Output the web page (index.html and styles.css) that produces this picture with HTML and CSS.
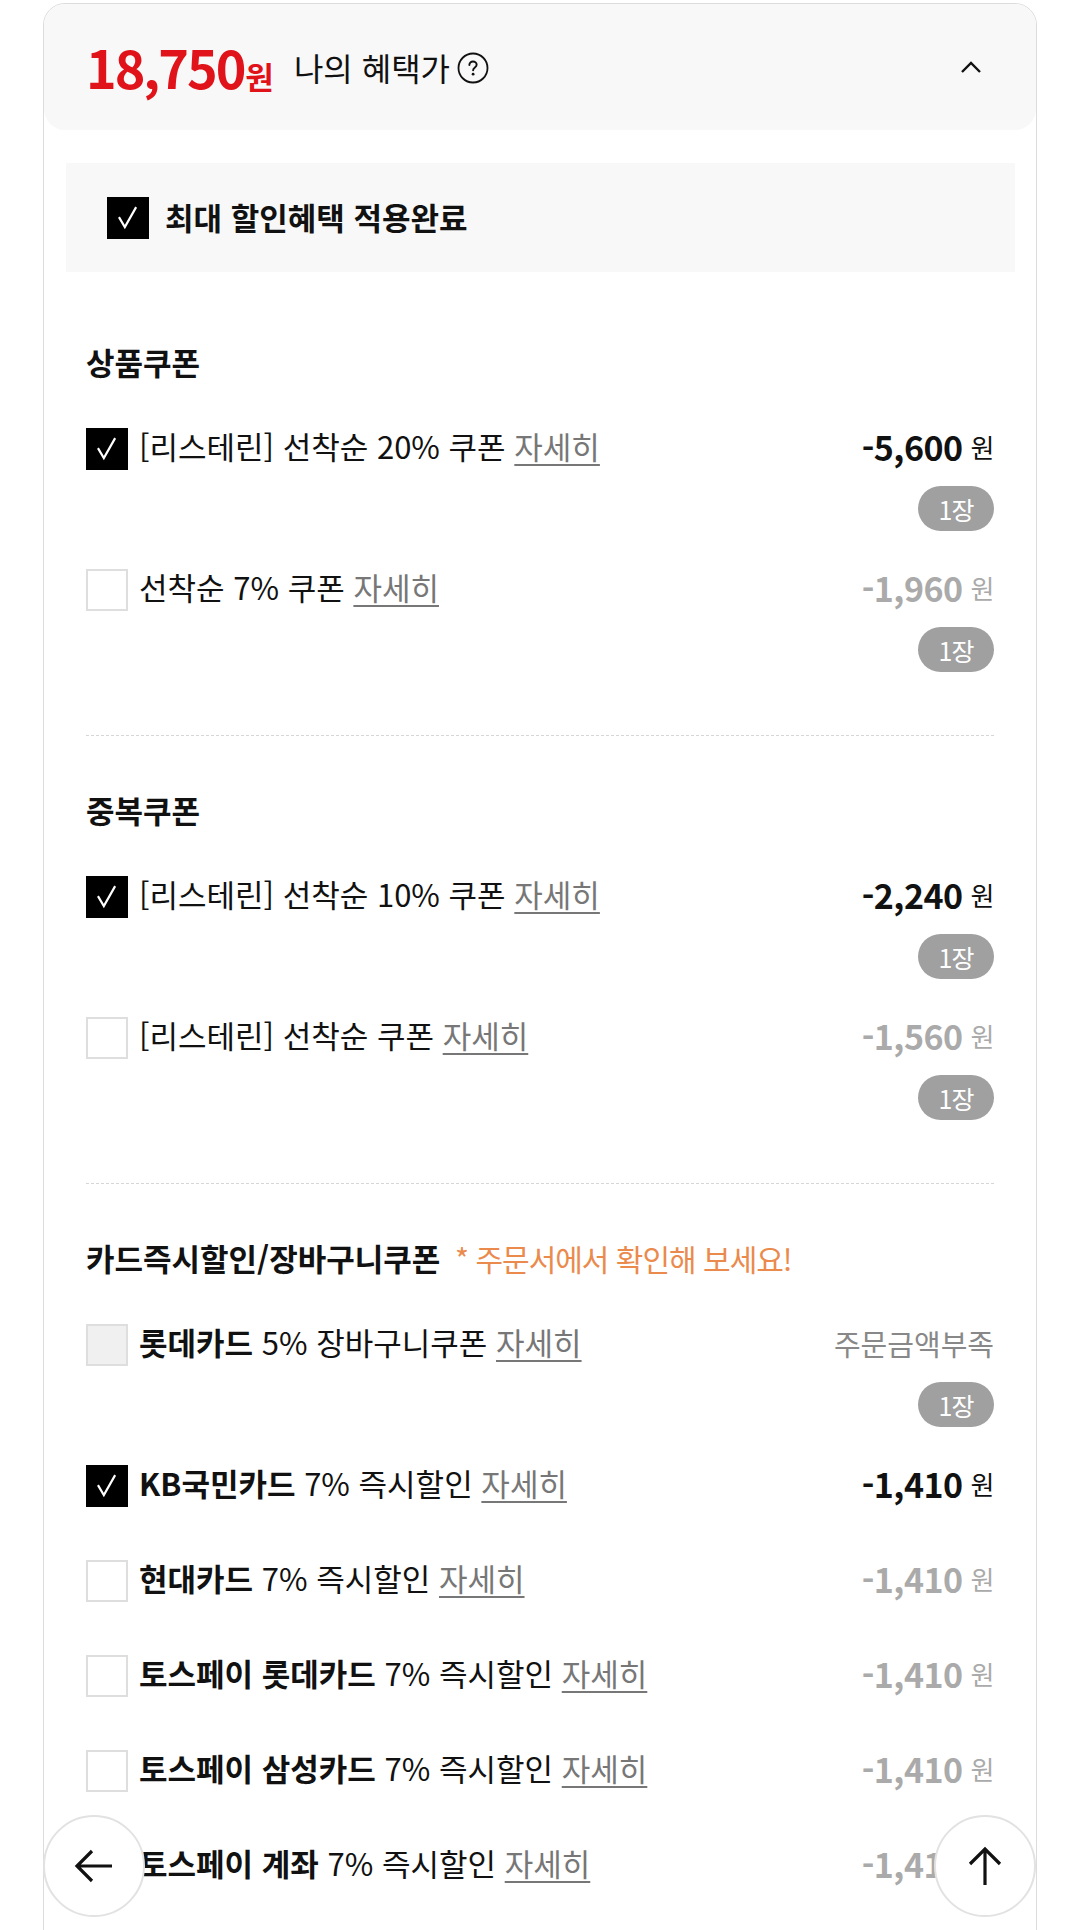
FILE: index.html
```html
<!DOCTYPE html>
<html lang="ko">
<head>
  <meta charset="UTF-8">
  <meta name="viewport" content="width=device-width,initial-scale=1">
  <title>나의 혜택가</title>
  <link rel="stylesheet" href="styles.css">
</head>
<body>

  <div class="card">
    <!-- 혜택가 요약 -->
    <div class="summary">
      <span class="total">18,750<small>원</small></span>
      <span class="summary-label">나의 혜택가</span>
      <svg class="help" width="32" height="32" viewBox="0 0 30 30"><circle cx="15" cy="15" r="13.6" fill="none" stroke="#111" stroke-width="1.7"/><path d="M11.6 12.2c0-2 1.5-3.3 3.4-3.3s3.4 1.3 3.4 3c0 2.6-3.3 2.6-3.3 5.2" fill="none" stroke="#111" stroke-width="1.8" stroke-linecap="round"/><circle cx="15.1" cy="20.8" r="1.3" fill="#111"/></svg>
      <svg class="toggle" width="22" height="14" viewBox="0 0 22 14"><path d="M2 12L11 3l9 9" fill="none" stroke="#111" stroke-width="2.4"/></svg>
    </div>

    <div class="max-box">
      <span class="check on"></span>
      <strong>최대 할인혜택 적용완료</strong>
    </div>

    <!-- 상품쿠폰 -->
    <section class="group">
      <h3>상품쿠폰</h3>
      <ul class="coupons">
        <li class="coupon">
          <span class="check on"></span>
          <p class="name">[리스테린] 선착순 20% 쿠폰 <a href="#">자세히</a></p>
          <div class="side"><span class="amount">-5,600<em>원</em></span><span class="badge">1장</span></div>
        </li>
        <li class="coupon off">
          <span class="check"></span>
          <p class="name">선착순 7% 쿠폰 <a href="#">자세히</a></p>
          <div class="side"><span class="amount">-1,960<em>원</em></span><span class="badge">1장</span></div>
        </li>
      </ul>
    </section>

    <!-- 중복쿠폰 -->
    <section class="group">
      <h3>중복쿠폰</h3>
      <ul class="coupons">
        <li class="coupon">
          <span class="check on"></span>
          <p class="name">[리스테린] 선착순 10% 쿠폰 <a href="#">자세히</a></p>
          <div class="side"><span class="amount">-2,240<em>원</em></span><span class="badge">1장</span></div>
        </li>
        <li class="coupon off">
          <span class="check"></span>
          <p class="name">[리스테린] 선착순 쿠폰 <a href="#">자세히</a></p>
          <div class="side"><span class="amount">-1,560<em>원</em></span><span class="badge">1장</span></div>
        </li>
      </ul>
    </section>

    <!-- 카드즉시할인 / 장바구니쿠폰 -->
    <section class="group last">
      <h3>카드즉시할인/장바구니쿠폰 <span class="notice">* 주문서에서 확인해 보세요!</span></h3>
      <ul class="coupons">
        <li class="coupon off">
          <span class="check disabled"></span>
          <p class="name"><b>롯데카드</b> 5% 장바구니쿠폰 <a href="#">자세히</a></p>
          <div class="side"><span class="lack">주문금액부족</span><span class="badge">1장</span></div>
        </li>
        <li class="coupon">
          <span class="check on"></span>
          <p class="name"><b>KB국민카드</b> 7% 즉시할인 <a href="#">자세히</a></p>
          <div class="side"><span class="amount">-1,410<em>원</em></span></div>
        </li>
        <li class="coupon off">
          <span class="check"></span>
          <p class="name"><b>현대카드</b> 7% 즉시할인 <a href="#">자세히</a></p>
          <div class="side"><span class="amount">-1,410<em>원</em></span></div>
        </li>
        <li class="coupon off">
          <span class="check"></span>
          <p class="name"><b>토스페이 롯데카드</b> 7% 즉시할인 <a href="#">자세히</a></p>
          <div class="side"><span class="amount">-1,410<em>원</em></span></div>
        </li>
        <li class="coupon off">
          <span class="check"></span>
          <p class="name"><b>토스페이 삼성카드</b> 7% 즉시할인 <a href="#">자세히</a></p>
          <div class="side"><span class="amount">-1,410<em>원</em></span></div>
        </li>
        <li class="coupon off">
          <span class="check"></span>
          <p class="name"><b>토스페이 계좌</b> 7% 즉시할인 <a href="#">자세히</a></p>
          <div class="side"><span class="amount">-1,410<em>원</em></span></div>
        </li>
      </ul>
    </section>
  </div>

  <!-- 플로팅 버튼 -->
  <button class="float-btn back" aria-label="뒤로">
    <svg width="40" height="36" viewBox="0 0 40 36"><path d="M38 18H4M18 3L3 18l15 15" fill="none" stroke="#111" stroke-width="3.2"/></svg>
  </button>
  <button class="float-btn top" aria-label="맨 위로">
    <svg width="36" height="40" viewBox="0 0 36 40"><path d="M18 39V4M3 18L18 3l15 15" fill="none" stroke="#111" stroke-width="3.2"/></svg>
  </button>

</body>
</html>
```

FILE: styles.css
```css
/* ===== 기본 ===== */
*,*::before,*::after{margin:0;padding:0;box-sizing:border-box}
html,body{
  width:100%;height:100%;
  overflow:hidden;
  background:#fff;
  color:#111;
  font-family:"Noto Sans CJK KR","Noto Sans",sans-serif;
}
ul{list-style:none}
a{color:#777;text-underline-offset:5px;text-decoration-thickness:2px}

/* ===== 카드 ===== */
.card{
  width:994px;
  margin:3px auto 0;
  border:1px solid #dcdcdc;
  border-radius:22px 22px 0 0;
  min-height:2000px;
}

/* ===== 요약 헤더 ===== */
.summary{
  height:126px;
  display:flex;
  align-items:center;
  padding:0 54px 0 42px;
  background:#f8f8f8;
  border-radius:21px;
}
.total{
  color:#e1131a;
  font-size:52px;
  font-weight:700;
  letter-spacing:-2px;
  line-height:1;
}
.total small{font-size:31px;letter-spacing:0;margin-left:1px}
.summary-label{
  font-size:32px;
  margin-left:20px;
}
.help{margin-left:7px;margin-top:2px}
.toggle{margin-left:auto}

/* ===== 최대 할인 박스 ===== */
.max-box{
  height:109px;
  margin:33px 21px 0 22px;
  background:#f8f8f8;
  display:flex;
  align-items:center;
  padding-left:41px;
  gap:16px;
}
.max-box strong{font-size:31px;font-weight:700;padding-bottom:3px}

/* ===== 체크박스 ===== */
.check{
  flex:none;
  width:42px;height:42px;
  border:2px solid #dedede;
  background:#fff;
}
.check.on{
  border-color:#000;
  background:#000 url("data:image/svg+xml,%3Csvg xmlns='http://www.w3.org/2000/svg' viewBox='0 0 42 42'%3E%3Cpath d='M11 20l6.5 11L30 9' fill='none' stroke='%23fff' stroke-width='2.4'/%3E%3C/svg%3E") no-repeat center/100%;
}
.check.disabled{background:#f0f0f0}

/* ===== 쿠폰 그룹 ===== */
.group{
  margin:0 42px;
  padding:55px 0 63px;
  border-bottom:1px dashed #d6d6d6;
}
.group:first-of-type{padding-top:71px}
.group.last{border-bottom:none}
.group h3{
  font-size:31px;
  font-weight:700;
  line-height:38px;
  height:40px;
  margin-bottom:30px;
}
.notice{
  color:#ea8a4c;
  font-size:30px;
  font-weight:400;
  letter-spacing:-1px;
  margin-left:6px;
}
.coupons{display:flex;flex-direction:column;gap:23px}
.coupon{display:flex;align-items:flex-start}
.coupon .check{margin-top:15px}
.name{
  flex:1;
  font-size:31px;
  line-height:66px;
  height:72px;
  margin-left:11px;
  white-space:nowrap;
}
.name b{font-weight:700}
.side{
  display:flex;
  flex-direction:column;
  align-items:flex-end;
}
.amount{
  height:72px;
  display:flex;
  align-items:center;
  padding-bottom:5px;
  font-size:34px;
  font-weight:700;
  letter-spacing:-0.5px;
}
.amount em{
  font-style:normal;
  font-weight:400;
  font-size:26px;
  margin-left:8px;
}
.coupon.off .amount{color:#aaa}
.lack{
  height:72px;
  display:flex;
  align-items:center;
  padding-bottom:5px;
  color:#888;
  font-size:29px;
}
.badge{
  margin-top:1px;
  width:76px;height:45px;
  border-radius:23px;
  background:#a0a0a0;
  color:#fff;
  font-size:25px;
  display:flex;
  align-items:center;
  justify-content:center;
  letter-spacing:-1px;
}

/* ===== 플로팅 버튼 ===== */
.float-btn{
  position:fixed;
  bottom:13px;
  width:102px;height:102px;
  border-radius:50%;
  border:2px solid #e2e2e2;
  background:#fff;
  display:flex;
  align-items:center;
  justify-content:center;
}
.float-btn.back{left:43px}
.float-btn.top{left:934px}
```
